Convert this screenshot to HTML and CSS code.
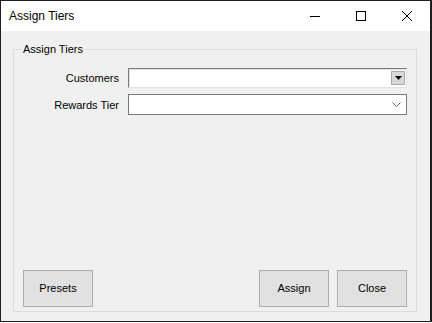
FILE: index.html
```html
<!DOCTYPE html>
<html lang="en">
<head>
    <meta charset="UTF-8">
    <title>Assign Tiers</title>
    <link rel="stylesheet" href="styles.css">
</head>
<body>
    <div class="window">
      <div class="titlebar">
        <span class="title">Assign Tiers</span>
        <div class="controls">
          <span class="ctl">
            <svg width="10" height="10" viewBox="0 0 10 10"><path d="M0 5.5h10" stroke="#000" stroke-width="1"/></svg>
          </span>
          <span class="ctl">
            <svg width="10" height="10" viewBox="0 0 10 10"><rect x="0.5" y="0.5" width="9" height="9" fill="none" stroke="#000" stroke-width="1"/></svg>
          </span>
          <span class="ctl">
            <svg width="10" height="10" viewBox="0 0 10 10"><path d="M0 0L10 10M10 0L0 10" stroke="#000" stroke-width="1"/></svg>
          </span>
        </div>
      </div>

      <div class="client">
        <fieldset class="group">
          <legend>Assign Tiers</legend>

          <div class="fields">
            <label for="customers">Customers</label>
            <div class="combo sunken" id="customers">
              <span class="drop-btn">
                <svg width="7" height="4" viewBox="0 0 7 4"><path d="M0 0h7L3.5 4z" fill="#000"/></svg>
              </span>
            </div>

            <label for="rewardsTier">Rewards Tier</label>
            <div class="combo flat" id="rewardsTier">
              <span class="chevron">
                <svg width="9" height="5" viewBox="0 0 9 5"><path d="M0.5 0.5L4.5 4.5L8.5 0.5" fill="none" stroke="#606060" stroke-width="1"/></svg>
              </span>
            </div>
          </div>

          <div class="actions">
            <button>Presets</button>
            <span class="spacer"></span>
            <button>Assign</button>
            <button>Close</button>
          </div>
        </fieldset>
      </div>
    </div>
</body>
</html>
```

FILE: styles.css
```css
body {
    margin: 0;
    font-family: "Liberation Sans", Arial, sans-serif;
    font-size: 11px;
    color: #000;
    background: #fff;
}
.window {
    width: 432px;
    height: 322px;
    box-sizing: border-box;
    border: 1px solid #1f1f1f;
    border-right-width: 2px;
    display: flex;
    flex-direction: column;
    background: #f0f0f0;
}
.titlebar {
    height: 30px;
    background: #fff;
    display: flex;
    align-items: center;
    flex-shrink: 0;
}
.title {
    font-size: 12px;
    padding-left: 8px;
    flex-grow: 1;
    padding-bottom: 1px;
}
.controls {
    display: flex;
    height: 100%;
}
.ctl {
    width: 46px;
    display: flex;
    align-items: center;
    justify-content: center;
}
.ctl svg {
    display: block;
}
.client {
    flex-grow: 1;
    display: flex;
    padding: 12px 13px 9px 12px;
}
.group {
    flex-grow: 1;
    margin: 0;
    padding: 0 9px 4px 9px;
    border: 1px solid #dcdcdc;
    display: flex;
    flex-direction: column;
    min-width: 0;
}
.group legend {
    padding: 0 1px;
    margin-left: -1px;
    line-height: 13px;
}
.fields {
    display: grid;
    grid-template-columns: 96px 1fr;
    column-gap: 9px;
    row-gap: 6px;
    margin-top: 12px;
    align-items: center;
}
.fields label {
    text-align: right;
}
.combo {
    height: 21px;
    box-sizing: border-box;
    background: #fff;
    display: flex;
    align-items: center;
    justify-content: flex-end;
}
.sunken {
    height: 20px;
    border-style: solid;
    border-width: 1px;
    border-color: #7a7a7a #e3e3e3 #e3e3e3 #7a7a7a;
    box-shadow: inset 1px 1px 0 #e3e3e3;
    padding-right: 1px;
}
.drop-btn {
    width: 14px;
    height: 14px;
    box-sizing: border-box;
    background: #d8d8d8;
    border: 1px solid #a8a8a8;
    display: flex;
    align-items: center;
    justify-content: center;
}
.drop-btn svg,
.chevron svg {
    display: block;
}
.flat {
    border: 1px solid #7a7a7a;
}
.chevron {
    width: 17px;
    display: flex;
    justify-content: center;
    padding-right: 1px;
}
.actions {
    margin-top: auto;
    display: flex;
    gap: 8px;
}
.spacer {
    flex-grow: 1;
}
button {
    all: unset;
    width: 70px;
    height: 37px;
    box-sizing: border-box;
    background: #e1e1e1;
    border: 1px solid #adadad;
    text-align: center;
    font-family: "Liberation Sans", Arial, sans-serif;
    font-size: 11px;
    line-height: 35px;
    color: #000;
}
```
